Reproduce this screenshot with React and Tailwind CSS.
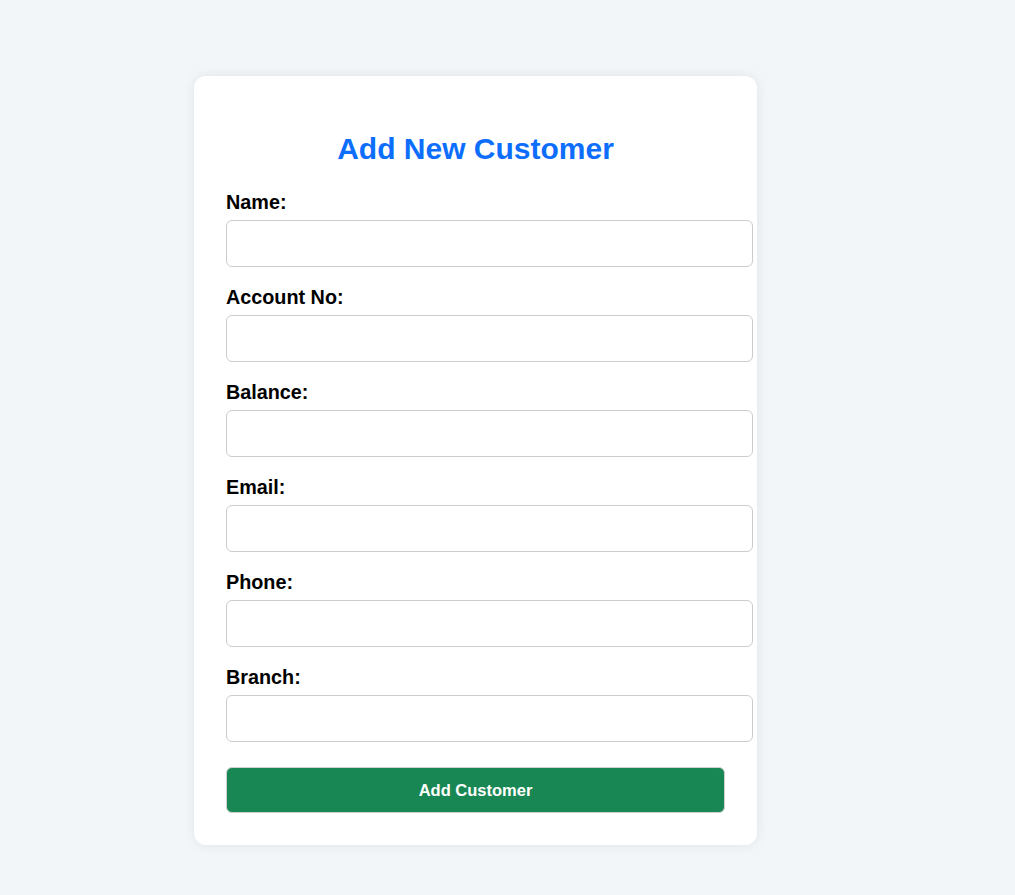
import React, { useState } from 'react';

const fields = [
    { id: 'name', label: 'Name:' },
    { id: 'accountNo', label: 'Account No:' },
    { id: 'balance', label: 'Balance:' },
    { id: 'email', label: 'Email:' },
    { id: 'phone', label: 'Phone:' },
    { id: 'branch', label: 'Branch:' },
];

const App = () => {
    const [form, setForm] = useState({});

    const handleChange = (e) => {
        setForm({ ...form, [e.target.name]: e.target.value });
    };

    const handleSubmit = (e) => {
        e.preventDefault();
    };

    return (
        <div className="min-h-screen bg-[#f3f6f9] pt-[76px] pl-[194px] font-['Liberation_Sans',Arial,sans-serif]">
            <div className="w-[563px] bg-white rounded-xl shadow-[0_0_12px_rgba(0,0,0,0.08)] px-8 pt-[55px] pb-8">
                <h2 className="text-[30px] leading-[36px] font-bold text-[#0d6efd] text-center mb-[23px]">
                    Add New Customer
                </h2>
                <form onSubmit={handleSubmit}>
                    {fields.map(field => (
                        <div key={field.id} className="mb-[18px]">
                            <label htmlFor={field.id} className="block text-[19.8px] leading-[24px] font-bold text-black mb-[6px]">
                                {field.label}
                            </label>
                            <input
                                id={field.id}
                                name={field.id}
                                type="text"
                                value={form[field.id] || ''}
                                onChange={handleChange}
                                className="block w-[527px] h-[47px] px-3 border border-[#cccccc] rounded-md bg-white outline-none"
                            />
                        </div>
                    ))}
                    <button
                        type="submit"
                        className="w-[499px] h-[46px] mt-[7px] bg-[#198754] text-white text-[16.5px] font-bold rounded-md border border-[#cfcfcf]"
                    >
                        Add Customer
                    </button>
                </form>
            </div>
        </div>
    );
};

export default App;
